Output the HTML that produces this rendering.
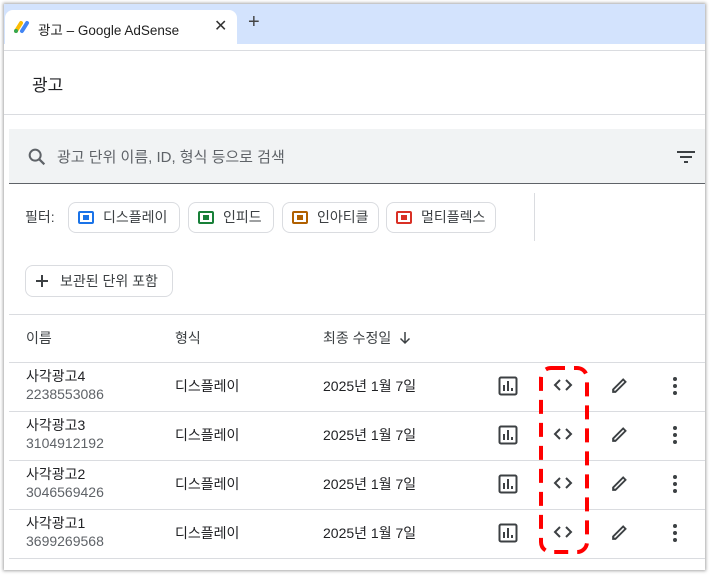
<!DOCTYPE html>
<html><head><meta charset="utf-8"><style>
*{box-sizing:border-box;margin:0;padding:0}
body{width:710px;height:575px;background:#fff;font-family:"Liberation Sans","Noto Sans CJK KR",sans-serif;color:#202124;position:relative;overflow:hidden}
.win{position:absolute;left:4px;top:4px;width:701px;height:566px;background:#fff;box-shadow:0 0 3px 1px rgba(0,0,0,.35);overflow:hidden}
.strip{position:absolute;left:0;top:0;width:100%;height:40px;background:#d3e3fd}
.tab{position:absolute;left:1px;top:6px;width:232px;height:34px;background:#fff;border-radius:8px 8px 0 0}
.abs{position:absolute}
.chip{position:absolute;top:198px;height:31px;border:1px solid #dadce0;border-radius:8px;font-size:14px;color:#3c4043;padding-left:34px;line-height:29px}
.chip i{position:absolute;left:9px;top:8px;width:16px;height:13px;border:2px solid;border-radius:2px}
.chip i:after{content:"";position:absolute;left:3px;top:2px;width:6px;height:5px;background:currentColor}
.hl{position:absolute;left:5px;width:696px;height:1px;background:#dadce0}
.r{position:absolute;left:4px;width:701px;height:49px}
.r .n{position:absolute;left:22px;top:4px;font-size:14px}
.r .id{position:absolute;left:22px;top:24px;font-size:14px;color:#5f6368}
.r .t{position:absolute;left:171px;top:14px;font-size:14px}
.r .d{position:absolute;left:319px;top:14px;font-size:14px}
</style></head><body>
<div class="win">
<div class="strip"></div>
<div class="tab">
<svg class="abs" style="left:8px;top:10px" width="18" height="14" viewBox="0 0 18 14"><line x1="3" y1="11" x2="8" y2="3" stroke="#fbbc04" stroke-width="4" stroke-linecap="round"/><line x1="9" y1="11" x2="14" y2="3" stroke="#4285f4" stroke-width="4" stroke-linecap="round"/><circle cx="3" cy="11" r="2" fill="#34a853"/></svg>
<div class="abs" style="left:33px;top:9px;font-size:13.5px;color:#1f1f1f">광고 – Google AdSense</div>
<div class="abs" style="left:209px;top:6px;font-size:16px;color:#333">✕</div>
</div>
<div class="abs" style="left:244px;top:7px;font-size:20px;color:#444">+</div>
<div class="hl" style="left:0;width:701px;top:46px"></div>
<div class="abs" style="left:28px;top:67px;font-size:17px">광고</div>
<div class="hl" style="left:0;width:701px;top:110px"></div>
<div class="abs" style="left:5px;top:125px;width:696px;height:55px;background:#f1f3f4;border-bottom:1px solid #5f6368"></div>
<svg class="abs" style="left:22px;top:142px" width="22" height="22" viewBox="0 0 24 24"><circle cx="10" cy="10" r="6" fill="none" stroke="#5f6368" stroke-width="2.2"/><line x1="14.5" y1="14.5" x2="20" y2="20" stroke="#5f6368" stroke-width="2.4"/></svg>
<div class="abs" style="left:53px;top:142px;font-size:15px;color:#5f6368">광고 단위 이름, ID, 형식 등으로 검색</div>
<svg class="abs" style="left:672px;top:145px" width="20" height="16" viewBox="0 0 20 16"><rect x="1" y="2" width="18" height="2" fill="#3c4043"/><rect x="4" y="7" width="12" height="2" fill="#3c4043"/><rect x="8" y="12" width="4" height="2" fill="#3c4043"/></svg>
<div class="abs" style="left:21px;top:203px;font-size:14px;color:#3c4043">필터:</div>
<div class="chip" style="left:64px;width:112px;"><i style="color:#1a73e8"></i>디스플레이</div>
<div class="chip" style="left:184px;width:86px;"><i style="color:#188038"></i>인피드</div>
<div class="chip" style="left:278px;width:97px;"><i style="color:#b06000"></i>인아티클</div>
<div class="chip" style="left:382px;width:110px;"><i style="color:#d93025"></i>멀티플렉스</div>
<div class="abs" style="left:530px;top:189px;width:1px;height:48px;background:#dadce0"></div>
<div class="abs" style="left:21px;top:261px;width:148px;height:32px;border:1px solid #dadce0;border-radius:8px;font-size:14px;color:#3c4043;line-height:30px;padding-left:34px">보관된 단위 포함</div>
<svg class="abs" style="left:31px;top:270px" width="14" height="14" viewBox="0 0 14 14"><path d="M7 1v12M1 7h12" stroke="#3c4043" stroke-width="2"/></svg>
<div class="hl" style="top:310px"></div>
<div class="abs" style="left:22px;top:324px;font-size:14px;color:#3c4043">이름</div>
<div class="abs" style="left:171px;top:324px;font-size:14px;color:#3c4043">형식</div>
<div class="abs" style="left:319px;top:324px;font-size:14px;color:#3c4043">최종 수정일</div>
<svg class="abs" style="left:395px;top:327px" width="12" height="14" viewBox="0 0 12 14"><path d="M6 1v11M1.5 7.5 6 12l4.5-4.5" fill="none" stroke="#3c4043" stroke-width="1.5"/></svg>
<div class="hl" style="top:358px"></div>
<div class="hl" style="top:407px"></div>
<div class="hl" style="top:456px"></div>
<div class="hl" style="top:505px"></div>
<div class="hl" style="top:554px"></div>
</div>

<div class="r" style="top:362px"><div class="n">사각광고4</div><div class="id">2238553086</div><div class="t">디스플레이</div><div class="d">2025년 1월 7일</div>
<svg class="abs" style="left:494px;top:14px" width="20" height="20" viewBox="0 0 20 20"><rect x="1.5" y="1.5" width="17" height="17" rx="1.5" fill="none" stroke="#3c4043" stroke-width="2"/><rect x="5" y="9" width="2" height="6" fill="#3c4043"/><rect x="9" y="5" width="2" height="10" fill="#3c4043"/><rect x="13" y="12" width="2" height="3" fill="#3c4043"/></svg>
<svg class="abs" style="left:549px;top:15px" width="20" height="16" viewBox="0 0 20 16"><path d="M7 3 2 8l5 5M13 3l5 5-5 5" fill="none" stroke="#3c4043" stroke-width="2"/></svg>
<svg class="abs" style="left:605px;top:13px" width="21" height="21" viewBox="0 0 20 20"><path d="M3 17v-3.5L13.5 3 17 6.5 6.5 17z" fill="#3c4043"/><path d="M5 15v-1L13.5 5.5l1 1L6 15z" fill="#fff"/></svg>
<svg class="abs" style="left:668px;top:14px" width="6" height="20" viewBox="0 0 6 20"><circle cx="3" cy="3" r="2" fill="#3c4043"/><circle cx="3" cy="10" r="2" fill="#3c4043"/><circle cx="3" cy="17" r="2" fill="#3c4043"/></svg></div>
<div class="r" style="top:411px"><div class="n">사각광고3</div><div class="id">3104912192</div><div class="t">디스플레이</div><div class="d">2025년 1월 7일</div>
<svg class="abs" style="left:494px;top:14px" width="20" height="20" viewBox="0 0 20 20"><rect x="1.5" y="1.5" width="17" height="17" rx="1.5" fill="none" stroke="#3c4043" stroke-width="2"/><rect x="5" y="9" width="2" height="6" fill="#3c4043"/><rect x="9" y="5" width="2" height="10" fill="#3c4043"/><rect x="13" y="12" width="2" height="3" fill="#3c4043"/></svg>
<svg class="abs" style="left:549px;top:15px" width="20" height="16" viewBox="0 0 20 16"><path d="M7 3 2 8l5 5M13 3l5 5-5 5" fill="none" stroke="#3c4043" stroke-width="2"/></svg>
<svg class="abs" style="left:605px;top:13px" width="21" height="21" viewBox="0 0 20 20"><path d="M3 17v-3.5L13.5 3 17 6.5 6.5 17z" fill="#3c4043"/><path d="M5 15v-1L13.5 5.5l1 1L6 15z" fill="#fff"/></svg>
<svg class="abs" style="left:668px;top:14px" width="6" height="20" viewBox="0 0 6 20"><circle cx="3" cy="3" r="2" fill="#3c4043"/><circle cx="3" cy="10" r="2" fill="#3c4043"/><circle cx="3" cy="17" r="2" fill="#3c4043"/></svg></div>
<div class="r" style="top:460px"><div class="n">사각광고2</div><div class="id">3046569426</div><div class="t">디스플레이</div><div class="d">2025년 1월 7일</div>
<svg class="abs" style="left:494px;top:14px" width="20" height="20" viewBox="0 0 20 20"><rect x="1.5" y="1.5" width="17" height="17" rx="1.5" fill="none" stroke="#3c4043" stroke-width="2"/><rect x="5" y="9" width="2" height="6" fill="#3c4043"/><rect x="9" y="5" width="2" height="10" fill="#3c4043"/><rect x="13" y="12" width="2" height="3" fill="#3c4043"/></svg>
<svg class="abs" style="left:549px;top:15px" width="20" height="16" viewBox="0 0 20 16"><path d="M7 3 2 8l5 5M13 3l5 5-5 5" fill="none" stroke="#3c4043" stroke-width="2"/></svg>
<svg class="abs" style="left:605px;top:13px" width="21" height="21" viewBox="0 0 20 20"><path d="M3 17v-3.5L13.5 3 17 6.5 6.5 17z" fill="#3c4043"/><path d="M5 15v-1L13.5 5.5l1 1L6 15z" fill="#fff"/></svg>
<svg class="abs" style="left:668px;top:14px" width="6" height="20" viewBox="0 0 6 20"><circle cx="3" cy="3" r="2" fill="#3c4043"/><circle cx="3" cy="10" r="2" fill="#3c4043"/><circle cx="3" cy="17" r="2" fill="#3c4043"/></svg></div>
<div class="r" style="top:509px"><div class="n">사각광고1</div><div class="id">3699269568</div><div class="t">디스플레이</div><div class="d">2025년 1월 7일</div>
<svg class="abs" style="left:494px;top:14px" width="20" height="20" viewBox="0 0 20 20"><rect x="1.5" y="1.5" width="17" height="17" rx="1.5" fill="none" stroke="#3c4043" stroke-width="2"/><rect x="5" y="9" width="2" height="6" fill="#3c4043"/><rect x="9" y="5" width="2" height="10" fill="#3c4043"/><rect x="13" y="12" width="2" height="3" fill="#3c4043"/></svg>
<svg class="abs" style="left:549px;top:15px" width="20" height="16" viewBox="0 0 20 16"><path d="M7 3 2 8l5 5M13 3l5 5-5 5" fill="none" stroke="#3c4043" stroke-width="2"/></svg>
<svg class="abs" style="left:605px;top:13px" width="21" height="21" viewBox="0 0 20 20"><path d="M3 17v-3.5L13.5 3 17 6.5 6.5 17z" fill="#3c4043"/><path d="M5 15v-1L13.5 5.5l1 1L6 15z" fill="#fff"/></svg>
<svg class="abs" style="left:668px;top:14px" width="6" height="20" viewBox="0 0 6 20"><circle cx="3" cy="3" r="2" fill="#3c4043"/><circle cx="3" cy="10" r="2" fill="#3c4043"/><circle cx="3" cy="17" r="2" fill="#3c4043"/></svg></div>

<svg class="abs" style="left:538px;top:365px" width="54" height="190" viewBox="0 0 54 190"><rect x="3" y="3" width="46" height="184" rx="10" fill="none" stroke="#f00" stroke-width="4" stroke-dasharray="14 9"/></svg>
</body></html>
